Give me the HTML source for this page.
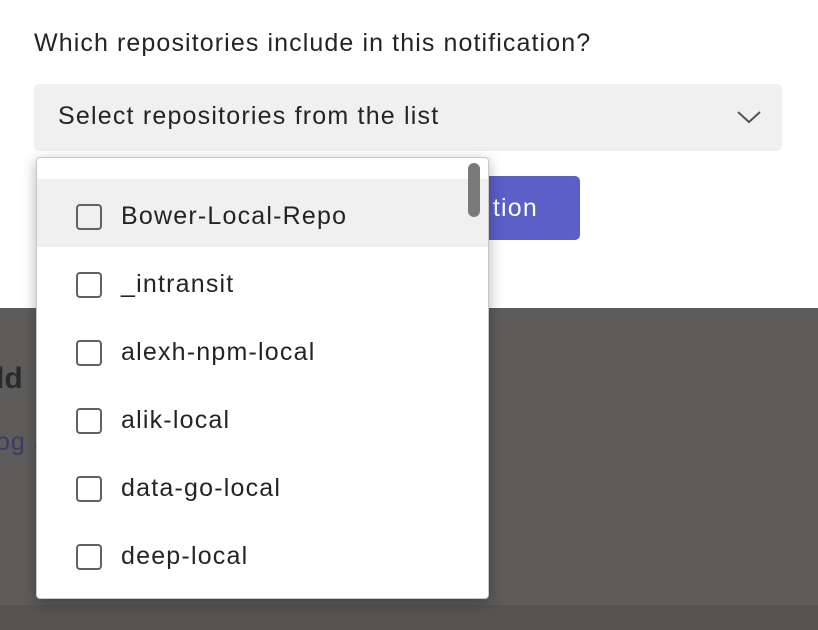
<!DOCTYPE html>
<html><head><style>
body{margin:0;width:818px;height:630px;position:relative;overflow:hidden;background:#fff;font-family:"Liberation Sans",sans-serif;color:#242424}
.t{position:absolute;left:34px;top:29px;font-size:25px;letter-spacing:1.1px}
.sel{position:absolute;left:34px;top:84px;width:748px;height:67px;background:#f0f0f0;border-radius:5px}
.sel span{position:absolute;left:24px;top:18px;font-size:25px;letter-spacing:1.2px}
.btn{position:absolute;left:36px;top:176px;width:544px;height:64px;background:#5b5fc7;border-radius:5px;color:#fff;font-size:25px;letter-spacing:1.2px}
.btn span{position:absolute;right:42px;top:18px}
.dark{position:absolute;left:0;top:308px;width:818px;height:322px;background:#5d5c5a}
.bot{position:absolute;left:0;top:605px;width:818px;height:25px;background:#555452}
.dk1{position:absolute;left:-4px;top:362px;font-size:30px;font-weight:bold;color:#2a2a2a}
.dk2{position:absolute;left:-4px;top:428px;font-size:25px;color:#3a3a66;letter-spacing:1px}
.dd{position:absolute;left:36px;top:157px;width:451px;height:440px;background:#fff;border:1px solid #c8c8c8;border-radius:4px;box-shadow:0 4px 14px rgba(0,0,0,.3);overflow:hidden}
.it{position:absolute;left:0;width:451px;height:68px;font-size:25px;letter-spacing:1.2px}
.it.h{background:#f0f0f0}
.cb{position:absolute;left:39px;top:25px;width:22px;height:22px;border:2px solid #616161;border-radius:4px}
.it span{position:absolute;left:84px;top:23px}
.sb{position:absolute;left:431px;top:5px;width:12px;height:54px;background:#7a7a7a;border-radius:6px}
</style></head><body>
<div class="t">Which repositories include in this notification?</div>
<div class="sel"><span>Select repositories from the list</span>
<svg style="position:absolute;left:702px;top:25px" width="26" height="16" viewBox="0 0 26 16"><path d="M2 3 L13 13 L24 3" fill="none" stroke="#555" stroke-width="2"/></svg></div>
<div class="btn"><span>tion</span></div>
<div class="dark"></div>
<div class="bot"></div>
<div class="dk1">ld</div>
<div class="dk2">og S</div>
<div class="dd">
<div class="it h" style="top:21px"><div class="cb"></div><span>Bower-Local-Repo</span></div>
<div class="it" style="top:89px"><div class="cb"></div><span>_intransit</span></div>
<div class="it" style="top:157px"><div class="cb"></div><span>alexh-npm-local</span></div>
<div class="it" style="top:225px"><div class="cb"></div><span>alik-local</span></div>
<div class="it" style="top:293px"><div class="cb"></div><span>data-go-local</span></div>
<div class="it" style="top:361px"><div class="cb"></div><span>deep-local</span></div>
<div class="sb"></div>
</div>
</body></html>
